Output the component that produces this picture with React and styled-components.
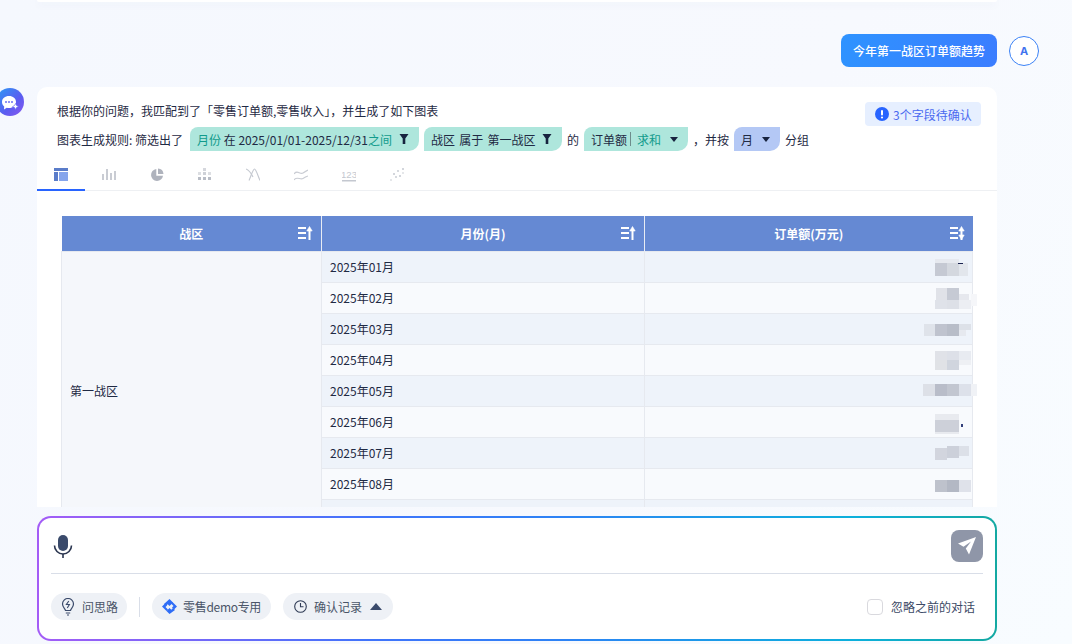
import React from "react";
import styled, { createGlobalStyle } from "styled-components";

const Global = createGlobalStyle`
  html, body { margin: 0; padding: 0; }
  body { font-family: "Noto Sans CJK SC", "Noto Sans", sans-serif; font-size: 12px; color: #1f2a44; }
  * { box-sizing: border-box; }
`;

const Page = styled.div`
  width: 1072px; height: 644px; overflow: hidden;
  display: flex; flex-direction: column;
  background: linear-gradient(120deg, #f5f8fe 0%, #f7f9fe 60%, #f8fcff 100%);
`;
const Scroll = styled.div`
  height: 507px; overflow: hidden; flex: none;
  padding-left: 37px; position: relative;
`;
const PrevCard = styled.div`
  width: 960px; height: 2px; background: #fff;
  border-radius: 0 0 10px 10px; box-shadow: 0 2px 8px rgba(60, 80, 130, .08);
`;
const AskRow = styled.div`
  display: flex; justify-content: flex-end; align-items: center; gap: 12px;
  width: 1002px; margin-top: 32px; height: 33px;
`;
const Bubble = styled.div`
  height: 33px; width: 156px; display: flex; align-items: center; justify-content: center;
  border-radius: 8px; color: #fff; font-size: 12px; font-weight: 500;
  background: linear-gradient(100deg, #2e93ff, #3b7dff);
`;
const UserAvatar = styled.div`
  width: 30px; height: 30px; border-radius: 50%; border: 1px solid #3b82f6; background: #fff;
  display: flex; align-items: center; justify-content: center;
  color: #3f73ee; font-weight: 700; font-size: 11px; font-family: "Inter", sans-serif;
`;
const Card = styled.div`
  position: relative; width: 960px; margin-top: 20px; background: #fff;
  border-radius: 10px 10px 0 0; padding-top: 14px;
`;
const BotAvatar = styled.div`
  position: absolute; left: -41px; top: 1px; width: 28px; height: 28px; border-radius: 50%;
  background: linear-gradient(135deg, #2b9bf5, #5b5cf0 60%, #8a58f0);
  display: flex; align-items: center; justify-content: center;
`;
const Intro = styled.div`
  padding-left: 20px; height: 20px; line-height: 20px; font-size: 12px; color: #1f2a44;
`;
const Confirm = styled.div`
  position: absolute; left: 828px; top: 15px; width: 116px; height: 24px;
  display: flex; align-items: center; gap: 4px; padding-left: 10px;
  background: #e6efff; border-radius: 4px; color: #4a6af0; font-size: 12px;
`;
const Rule = styled.div`
  display: flex; align-items: center; padding-left: 20px; height: 24px; margin-top: 6px;
  font-size: 12px; color: #1f2a44; white-space: pre;
`;
const Word = styled.span`margin-left: 5px;`;
const Lead = styled.span`width: 128px; flex: none;`;
const Chip = styled.div`
  height: 24px; display: flex; align-items: center; white-space: pre; flex: none;
  margin-left: 5px; padding: 0 9px 0 7px; width: ${p => p.$w}px;
  background: ${p => p.$blue ? "#b4c8f5" : "#aee6dc"};
  border-radius: 8px 0 10px 0; color: #1f2a44; word-spacing: ${p => p.$ws || 0}px;
`;
const Teal = styled.span`color: #119b8c;`;
const Sep = styled.span`width: 1px; height: 14px; background: #6e8c8c; margin: 0 6px 0 3px;`;
const ChipIcon = styled.svg`margin-left: auto; flex: none;`;

const Tabs = styled.div`
  display: flex; height: 31px; margin-top: 9px; border-bottom: 1px solid #eef0f3;
`;
const Tab = styled.div`
  width: 48px; height: 31px; display: flex; align-items: center; justify-content: center; flex: none;
  border-bottom: 2px solid ${p => p.$active ? "#2864ff" : "transparent"};
`;
const Body = styled.div`padding: 25px 25px 0 24px;`;
const Table = styled.table`
  width: 911px; border-collapse: collapse; table-layout: fixed; font-size: 12px;
`;
const Head = styled.th`
  position: relative; height: 35px; padding: 0; background: #6589d3; color: #fff;
  font-weight: 700; font-size: 12px; text-align: center;
  border-left: 1px solid #e8ecf4;
  &:first-child { border-left: 0; }
`;
const SortIcon = styled.svg`position: absolute; right: 8px; top: 10px;`;
const Row = styled.tr`background: ${p => p.$odd ? "#eef3fa" : "#f8fafd"};`;
const Td = styled.td`
  height: 31px; padding: 0 8px; border: 1px solid #e6e9ef; color: #1f2a44; line-height: 1;
`;
const Merged = styled(Td)`background: #f5f7fb; border-left: 1px solid #e6e9ef;`;
const ValueCell = styled.td`
  height: 31px; padding: 0; border: 1px solid #e6e9ef; position: relative;
`;
const Mosaic = styled.svg`position: absolute; left: 279px; top: 0; overflow: visible;`;

const Dock = styled.div`
  margin: 9px 0 0 37px; width: 960px; height: 125px; padding: 2px; border-radius: 14px; flex: none;
  background: linear-gradient(90deg, #a45cf6 0%, #3f74fb 35%, #2d83f5 55%, #0cb0dc 85%, #14a9a2 100%);
`;
const DockInner = styled.div`
  height: 100%; background: #fff; border-radius: 12px; padding: 12px 12px 0 12px;
`;
const InputRow = styled.div`
  display: flex; justify-content: space-between; align-items: center; height: 44px;
  padding-bottom: 11px; border-bottom: 1px solid #d9dee8;
`;
const Send = styled.div`
  width: 32px; height: 32px; border-radius: 8px; background: #8f96a8;
  display: flex; align-items: center; justify-content: center;
`;
const ToolRow = styled.div`
  display: flex; align-items: center; height: 27px; margin-top: 19px;
`;
const Pill = styled.div`
  height: 27px; border-radius: 14px; background: #eef1f6; color: #4a5568;
  display: flex; align-items: center; gap: ${p => p.$gap || 7}px;
  padding-left: ${p => p.$pl || 10}px; width: ${p => p.$w}px; margin-left: ${p => p.$ml || 0}px;
  font-size: 12px; flex: none;
`;
const Tight = styled.span`letter-spacing: -0.3px;`;
const Caret2 = styled.svg`margin-left: 1px;`;
const VBar = styled.div`width: 1px; height: 20px; background: #d9dee8; margin: 0 12px;`;
const Ignore = styled.div`margin-left: auto; display: flex; align-items: center; gap: 8px; color: #3c4a66; padding-right: 8px;`;
const Box = styled.div`width: 16px; height: 16px; border: 1px solid #d9d9de; border-radius: 4px; background: #fff;`;

const Filter = () => (
  <ChipIcon width="12" height="12" viewBox="0 0 12 12"><path d="M1.500 1h9L7.300 5.600V11H4.700V5.600z" fill="#17233f"/></ChipIcon>
);
const Caret = () => (
  <ChipIcon width="10" height="10" viewBox="0 0 10 10"><path d="M1 3h8L5 8z" fill="#17233f"/></ChipIcon>
);
const Sort = ({ both }) => (
  <SortIcon width="15" height="14" viewBox="0 0 15 14" fill="none" stroke="#fff" strokeWidth="2">
    <path d="M0 2h8M0 7h8M0 12h8"/>
    <path d="M11.500 14V3" />
    <path d="M8.800 5L11.500 0.500 14.200 5z" fill="#fff" strokeWidth="0.600"/>
    {both && <path d="M8.800 9L11.500 13.500 14.200 9z" fill="#fff" strokeWidth="0.600"/>}
  </SortIcon>
);

const tabIcons = [
  <svg key="0" width="14" height="13" viewBox="0 0 14 13"><rect width="14" height="3" fill="#5a7cc9"/><rect y="4" width="4" height="9" fill="#5a7cc9"/><rect x="5" y="4" width="9" height="9" fill="#86a5ec"/></svg>,
  <svg key="1" width="14" height="13" viewBox="0 0 14 13" fill="#c9ccd3"><rect y="6" width="2" height="6"/><rect x="4" y="1" width="2" height="11"/><rect x="8" y="5" width="2" height="7"/><rect x="12" y="3" width="2" height="9"/></svg>,
  <svg key="2" width="14" height="14" viewBox="0 0 14 14" fill="#afb3bd"><path d="M6.300 1a6 6 0 1 0 6.700 6.700H6.300z"/><path d="M8 0.500A6 6 0 0 1 13.500 6H8z" /></svg>,
  <svg key="3" width="14" height="13" viewBox="0 0 14 13" fill="#b9bdc6"><rect x="5" y="0" width="3" height="3" opacity=".6"/><rect x="0" y="4" width="3" height="3" opacity=".5"/><rect x="5" y="4" width="3" height="3" opacity=".7"/><rect x="10" y="4" width="3" height="3" opacity=".5"/><rect x="0" y="9" width="3" height="3"/><rect x="5" y="9" width="3" height="3"/><rect x="10" y="9" width="3" height="3"/></svg>,
  <svg key="4" width="14" height="13" viewBox="0 0 14 13" fill="none" stroke="#c4c8d0" strokeWidth="1.100"><path d="M0 1C3 2 5 5 7 9"/><path d="M3 12.500C5 8 7 1 8.500 1C10 1 12 8 14 12.500"/></svg>,
  <svg key="5" width="14" height="12" viewBox="0 0 14 12" fill="none" stroke="#c9ccd3" strokeWidth="1.200"><path d="M0 5c3-5 6 1 9-1s3-2 5-3M0 11c3-4 6 0 9-1.500s3-2 5-2.500"/></svg>,
  <svg key="6" width="14" height="14" viewBox="0 0 14 14"><text x="7" y="9.500" textAnchor="middle" fontSize="9.500" fill="#c4c8d0" fontFamily="Liberation Sans">123</text><rect y="12" width="14" height="1.500" fill="#c4c8d0"/></svg>,
  <svg key="7" width="14" height="13" viewBox="0 0 14 13" fill="#c4c8d0"><circle cx="1" cy="12" r=".8"/><circle cx="4" cy="6" r="1"/><circle cx="6" cy="9" r=".9"/><circle cx="8" cy="3" r=".9"/><circle cx="10" cy="8" r="1"/><circle cx="13" cy="1" r="1"/><circle cx="13" cy="5" r=".8"/></svg>,
];

const months = ["01","02","03","04","05","06","07","08"];
/* redacted values: [x from 925, y from row top, w, h, colour] */
const mosaics = [
  [[11,7,24,4,"#e6e9ef"],[11,11,12,13,"#c5c9d3"],[23,11,12,13,"#d4d8df"],[35,11,9,13,"#e2e6ec"],[34,11,5,1,"#1a2350"]],
  [[12,5,11,12,"#e0e2e8"],[23,5,12,12,"#c6cad4"],[35,11,10,6,"#e6e8ee"],[11,17,12,9,"#dfe2e9"],[23,17,12,9,"#dde0e7"],[35,17,12,9,"#eceef3"],[47,11,6,12,"#f5f6f9"]],
  [[0,10,11,12,"#dfe3ea"],[11,10,12,12,"#bfc3ce"],[23,10,12,12,"#b8bdc8"],[35,10,12,6,"#dde1e8"],[35,16,7,6,"#e6e9ef"]],
  [[11,6,12,9,"#e0e2e8"],[23,6,12,9,"#dde0e8"],[35,6,12,9,"#e8ebf1"],[11,15,12,10,"#e0e2e6"],[23,15,12,10,"#d0d5de"],[35,15,12,5,"#eef0f4"]],
  [[-1,8,12,12,"#dde0e7"],[11,8,12,12,"#b9bdc9"],[23,8,12,12,"#c2c6d0"],[35,8,12,12,"#dde1ea"],[47,8,6,12,"#f0f2f6"]],
  [[11,7,24,6,"#e8eaef"],[11,13,24,12,"#cdd0d9"],[11,25,24,2,"#e8eaef"],[37,17,2,3,"#33407a"]],
  [[11,10,12,12,"#d2d5de"],[23,8,12,12,"#ccd0da"],[35,8,10,10,"#dce0e8"]],
  [[11,11,12,12,"#bec2cc"],[23,11,12,12,"#b3b8c4"],[35,11,12,12,"#dfe2ea"]],
];

export default function App() {
  return (
    <Page>
      <Global />
      <Scroll>
        <PrevCard />
        <AskRow>
          <Bubble>今年第一战区订单额趋势</Bubble>
          <UserAvatar>A</UserAvatar>
        </AskRow>
        <Card>
          <BotAvatar>
            <svg width="19" height="17" viewBox="0 0 19 17">
              <path d="M8 2c4 0 7 2.500 7 6s-3 6-7 6c-.8 0-1.500-.1-2.200-.3L3 15.500l.2-3C1.800 11.400 1 9.800 1 8c0-3.500 3-6 7-6z" fill="#fff"/>
              <circle cx="5" cy="8" r="1" fill="#6a70f2"/><circle cx="8" cy="8" r="1" fill="#6a70f2"/><circle cx="11" cy="8" r="1" fill="#6a70f2"/>
              <path d="M14.500 9.500l1 2 2 1-2 1-1 2-1-2-2-1 2-1z" fill="#fff" stroke="#6a70f2" strokeWidth=".6"/>
            </svg>
          </BotAvatar>
          <Intro>根据你的问题，我匹配到了「零售订单额,零售收入」，并生成了如下图表</Intro>
          <Confirm>
            <svg width="14" height="14" viewBox="0 0 14 14"><circle cx="7" cy="7" r="7" fill="#2864ff"/><rect x="6" y="3" width="2" height="5.500" rx="1" fill="#fff"/><circle cx="7" cy="10.500" r="1.100" fill="#fff"/></svg>
            <span>3个字段待确认</span>
          </Confirm>
          <Rule>
            <Lead>图表生成规则: 筛选出了</Lead>
            <Chip $w={229}>
              <Teal>月份</Teal><span> 在 2025/01/01-2025/12/31</span><Teal>之间</Teal><Filter />
            </Chip>
            <Chip $w={138} $ws={1.5}>
              <span>战区 属于 第一战区</span><Filter />
            </Chip>
            <Word>的</Word>
            <Chip $w={104}>
              <span>订单额</span><Sep /><Teal>求和</Teal><Caret />
            </Chip>
            <Word>，并按</Word>
            <Chip $w={46} $blue>
              <span>月</span><Caret />
            </Chip>
            <Word>分组</Word>
          </Rule>
          <Tabs>
            {tabIcons.map((icon, i) => <Tab key={i} $active={i === 0}>{icon}</Tab>)}
          </Tabs>
          <Body>
            <Table>
              <colgroup>
                <col style={{ width: 260 }} />
                <col style={{ width: 323 }} />
                <col style={{ width: 328 }} />
              </colgroup>
              <thead>
                <tr>
                  <Head>战区<Sort /></Head>
                  <Head>月份(月)<Sort /></Head>
                  <Head>订单额(万元)<Sort both /></Head>
                </tr>
              </thead>
              <tbody>
                {months.map((m, i) => (
                  <Row key={m} $odd={i % 2 === 0}>
                    {i === 0 && <Merged rowSpan={9}>第一战区</Merged>}
                    <Td>2025年{m}月</Td>
                    <ValueCell>
                      <Mosaic width="50" height="31" viewBox="0 0 50 31">
                        {mosaics[i].map(([x, y, w, h, c], k) => (
                          <rect key={k} x={x} y={y} width={w} height={h} fill={c} />
                        ))}
                      </Mosaic>
                    </ValueCell>
                  </Row>
                ))}
                <Row $odd>
                  <Td />
                  <ValueCell />
                </Row>
              </tbody>
            </Table>
          </Body>
        </Card>
      </Scroll>
      <Dock>
        <DockInner>
          <InputRow>
            <svg width="24" height="24" viewBox="0 0 24 24">
              <rect x="7" y="1" width="10" height="16" rx="5" fill="#3a4a6b"/>
              <path d="M3.500 11.500a8.500 8.500 0 0 0 17 0" fill="none" stroke="#2b3650" strokeWidth="1.600"/>
              <rect x="11.200" y="20" width="1.600" height="4" fill="#2b3650"/>
            </svg>
            <Send>
              <svg width="20" height="20" viewBox="0 0 20 20"><path d="M19 1L1 7.500l5.500 3.200L14 5.500 8.800 12.500 12 18.500z" fill="#fff"/></svg>
            </Send>
          </InputRow>
          <ToolRow>
            <Pill $w={76} $pl={9} $gap={6}>
              <svg width="16" height="18" viewBox="0 0 16 18" fill="none" stroke="#3a4a6b" strokeWidth="1.200">
                <path d="M5.500 12.500c0-1.500-3-3-3-6.500a5.500 5.500 0 0 1 11 0c0 3.500-3 5-3 6.500z"/>
                <path d="M5.800 15h4.400M7 17h2"/>
                <path d="M8.800 3L6.400 6.500h3L7.300 10" strokeWidth="1.100"/>
              </svg>
              <span>问思路</span>
            </Pill>
            <VBar />
            <Pill $w={119} $gap={6}>
              <svg width="15" height="15" viewBox="0 0 15 15" fill="#2f6df6">
                <path d="M7.500 0L11 3.500 7.500 7 5.700 5.200 4 7 2 5 z"/>
                <path d="M0 7.500L3 4.500 5 6.500 3.500 8 6 10.500 4.500 12z"/>
                <path d="M7.500 15L4.500 12 7.500 9 9.300 10.800 11 9 13 11z"/>
                <path d="M15 7.500L12 10.500 10 8.500 11.500 7 9 4.500 10.500 3z"/>
              </svg>
              <Tight>零售demo专用</Tight>
            </Pill>
            <Pill $w={110} $pl={11} $ml={12}>
              <svg width="13" height="13" viewBox="0 0 13 13" fill="none" stroke="#2f3b55" strokeWidth="1.100"><circle cx="6.500" cy="6.500" r="5.800"/><path d="M6.500 3v3.700h3"/></svg>
              <span>确认记录</span>
              <Caret2 width="12" height="8" viewBox="0 0 12 8"><path d="M6 0l6 7H0z" fill="#3a4a6b"/></Caret2>
            </Pill>
            <Ignore>
              <Box />
              <span>忽略之前的对话</span>
            </Ignore>
          </ToolRow>
        </DockInner>
      </Dock>
    </Page>
  );
}
